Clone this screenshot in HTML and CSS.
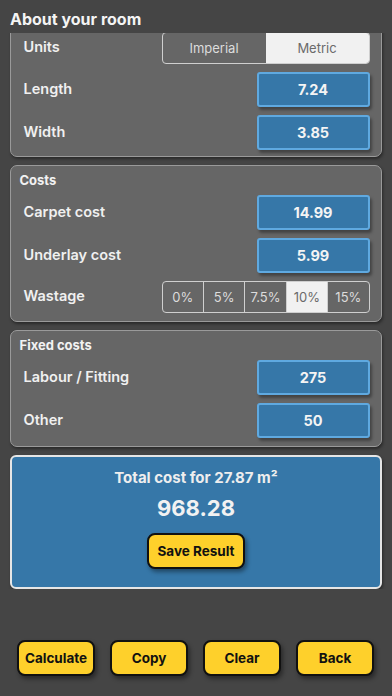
FILE: index.html
```html
<!DOCTYPE html>
<html lang="en">
<head>
    <meta charset="UTF-8">
    <meta name="viewport" content="width=device-width, initial-scale=1.0">
    <title>Carpet Calculator</title>
    <link rel="stylesheet" href="styles.css">
</head>
<body>
    <div class="screen">
        <div class="page-title">About your room</div>
        <div class="scroll">
            <div class="panel panel-room">
                <div class="row">
                    <span class="label">Units</span>
                    <div class="segmented units">
                        <span class="seg">Imperial</span>
                        <span class="seg active">Metric</span>
                    </div>
                </div>
                <div class="row">
                    <span class="label">Length</span>
                    <div class="field">7.24</div>
                </div>
                <div class="row">
                    <span class="label">Width</span>
                    <div class="field">3.85</div>
                </div>
            </div>

            <div class="panel">
                <div class="panel-title">Costs</div>
                <div class="row">
                    <span class="label">Carpet cost</span>
                    <div class="field">14.99</div>
                </div>
                <div class="row">
                    <span class="label">Underlay cost</span>
                    <div class="field">5.99</div>
                </div>
                <div class="row">
                    <span class="label">Wastage</span>
                    <div class="segmented wastage">
                        <span class="seg">0%</span>
                        <span class="seg">5%</span>
                        <span class="seg">7.5%</span>
                        <span class="seg active">10%</span>
                        <span class="seg">15%</span>
                    </div>
                </div>
            </div>

            <div class="panel">
                <div class="panel-title">Fixed costs</div>
                <div class="row">
                    <span class="label">Labour / Fitting</span>
                    <div class="field">275</div>
                </div>
                <div class="row">
                    <span class="label">Other</span>
                    <div class="field">50</div>
                </div>
            </div>

            <div class="result">
                <div class="result-title">Total cost for 27.87 m²</div>
                <div class="result-value">968.28</div>
                <button class="btn btn-save">Save Result</button>
            </div>
        </div>

        <div class="toolbar">
            <button class="btn">Calculate</button>
            <button class="btn">Copy</button>
            <button class="btn">Clear</button>
            <button class="btn">Back</button>
        </div>
    </div>
</body>
</html>
```

FILE: styles.css
```css
body {
    margin: 0;
    padding: 0;
    background-color: #454545;
    color: #f2f2f2;
    font-family: 'Inter', 'Roboto', sans-serif;
}

.screen {
    width: 392px;
    height: 696px;
    display: flex;
    flex-direction: column;
    overflow: hidden;
}

.page-title {
    height: 33px;
    box-sizing: border-box;
    padding: 9px 0 0 10px;
    font-size: 16px;
    font-weight: 700;
    line-height: 20px;
    color: #f4f4f4;
}

.scroll {
    overflow: hidden;
    padding: 0 10px;
    display: flex;
    flex-direction: column;
    gap: 8px;
}

.panel {
    background-color: #666;
    border: 1.5px solid #9a9a9a;
    border-radius: 7px;
    padding: 6px 11.5px 8px 12.5px;
    display: flex;
    flex-direction: column;
    gap: 8px;
    box-shadow: 1px 2px 3px rgba(0, 0, 0, 0.4);
}

.panel-room {
    margin-top: -8.5px;
    padding-bottom: 6px;
}

.panel-title {
    margin-left: -4px;
    font-size: 13px;
    font-weight: 700;
    line-height: 16px;
    height: 16px;
    margin-bottom: -1px;
    color: #f2f2f2;
}

.row {
    display: flex;
    justify-content: space-between;
    align-items: center;
}

.label {
    font-size: 14.5px;
    font-weight: 600;
    color: #f0f0f0;
    margin-top: -2px;
}

.field {
    width: 113px;
    height: 35px;
    box-sizing: border-box;
    background-color: #3677a8;
    border: 2px solid #5fa9e0;
    border-radius: 3px;
    display: flex;
    justify-content: center;
    align-items: center;
    font-size: 14.5px;
    font-weight: 700;
    color: #f4f4f4;
    box-shadow: 2px 3px 3px rgba(0, 0, 0, 0.35);
}

.segmented {
    display: flex;
    width: 208px;
    height: 32px;
    box-sizing: border-box;
    border: 1px solid #cfcfcf;
    border-radius: 4px;
    overflow: hidden;
}

.seg {
    flex: 1;
    display: flex;
    justify-content: center;
    align-items: center;
    font-size: 13px;
    color: #dcdcdc;
}

.wastage .seg {
    border-left: 1px solid #cfcfcf;
}

.wastage .seg:first-child {
    border-left: none;
}

.seg.active {
    background-color: #f1f1f1;
    color: #6a6a6a;
}

.result {
    height: 134px;
    box-sizing: border-box;
    background-color: #3677a8;
    border: 2px solid #e6e6e6;
    border-radius: 6px;
    display: flex;
    flex-direction: column;
    align-items: center;
    padding-top: 12px;
    box-shadow: 1px 2px 3px rgba(0, 0, 0, 0.4);
}

.result-title {
    font-size: 15px;
    font-weight: 700;
    line-height: 18px;
    color: #eeeeee;
}

.result-value {
    margin-top: 8px;
    font-size: 22px;
    font-weight: 700;
    line-height: 26px;
    color: #f2f2f2;
}

.btn {
    width: 78px;
    height: 36px;
    box-sizing: border-box;
    background-color: #fed02b;
    border: 2px solid #111;
    border-radius: 8px;
    font-family: 'Inter', 'Roboto', sans-serif;
    font-size: 13.5px;
    font-weight: 700;
    color: #111;
    padding: 0;
    box-shadow: 2px 3px 4px rgba(0, 0, 0, 0.4);
}

.btn-save {
    width: 98px;
    margin-top: 12px;
}

.toolbar {
    margin-top: auto;
    margin-bottom: 20px;
    padding: 0 18px 0 17px;
    display: flex;
    justify-content: space-between;
}
```
